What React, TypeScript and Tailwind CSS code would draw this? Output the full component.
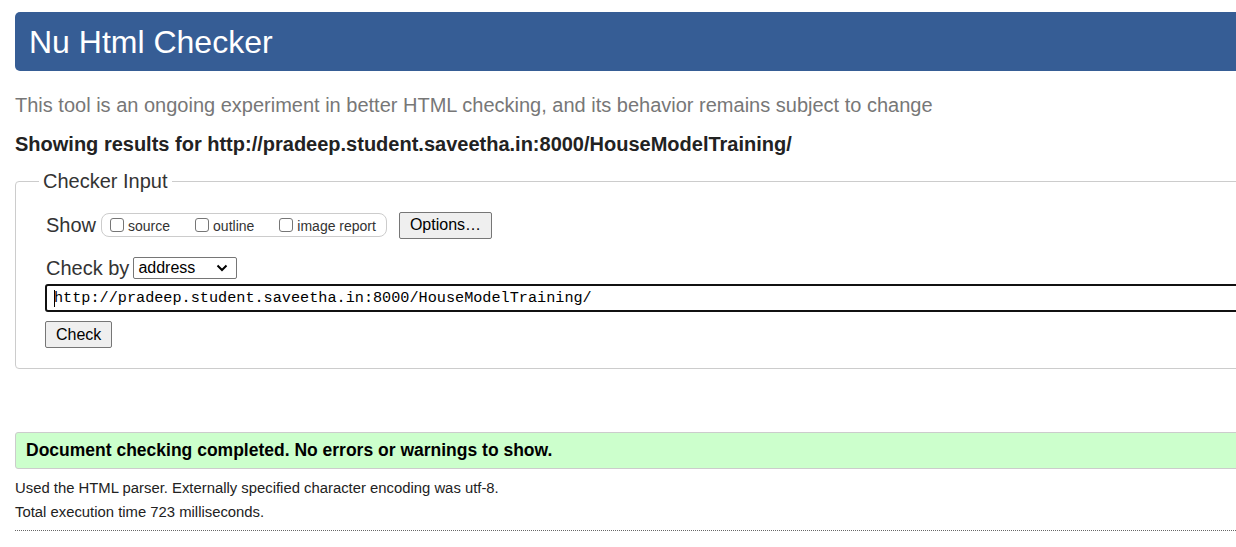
import React from 'react';

function Checkbox({ label }: { label: string }) {
  return (
    <label className="flex items-center gap-[4px]">
      <span className="w-[14px] h-[14px] rounded-[3px] border border-[#767676] bg-white" />
      <span className="text-[14px] text-[#333] mt-[2px]">{label}</span>
    </label>
  );
}

function Button({ children }: { children: React.ReactNode }) {
  return (
    <span className="inline-flex items-center px-[10px] h-[27px] bg-[#efefef] border border-[#767676] rounded-[2px] text-[16px] text-black">
      {children}
    </span>
  );
}

export default function App() {
  return (
    <div className="w-[1236px] h-[547px] overflow-hidden bg-white font-['Liberation_Sans',Arial,sans-serif] text-[#222]">
      <div className="w-[1300px] pl-[15px] pt-[12px]">
        <h1 className="h-[59px] flex items-center pl-[14px] bg-[#365d95] rounded-l-[5px] text-white text-[32px] leading-none">
          Nu Html Checker
        </h1>

        <p className="mt-[22px] text-[20px] leading-[24px] text-[#777]">
          This tool is an ongoing experiment in better HTML checking, and its behavior remains subject to change
        </p>
        <p className="mt-[15px] text-[20px] leading-[24px] font-bold text-[#222]">
          Showing results for http://pradeep.student.saveetha.in:8000/HouseModelTraining/
        </p>

        <fieldset className="mt-[10px] h-[203px] border border-[#ccc] rounded-l-[4px] pl-[30px] pt-[14px]">
          <legend className="-ml-[7px] px-[4px] text-[20px] text-[#333]">Checker Input</legend>
          <div className="flex items-center gap-[5px]">
            <span className="text-[20px] text-[#333]">Show</span>
            <div className="flex items-center gap-[25px] h-[24px] pl-[8px] pr-[10px] border border-[#ccc] rounded-[8px]">
              <Checkbox label="source" />
              <Checkbox label="outline" />
              <Checkbox label="image report" />
            </div>
            <span className="ml-[7px]">
              <Button>Options…</Button>
            </span>
          </div>

          <div className="mt-[13px] flex items-center gap-[4px]">
            <span className="text-[20px] text-[#333]">Check by</span>
            <span className="flex items-center justify-between w-[104px] h-[22px] pl-[4px] pr-[8px] border border-[#767676] rounded-[2px] text-[16px] text-black">
              address
              <svg width="12" height="8" viewBox="0 0 12 8" fill="none">
                <path d="M1.5 1.5 L6 6 L10.5 1.5" stroke="#000" strokeWidth="2" />
              </svg>
            </span>
          </div>

          <div className="mt-[1px] -ml-px h-[28px] flex items-center pl-[7px] border-2 border-[#111] rounded-[3px] font-['Liberation_Mono',monospace] text-[15.2px] text-black">
            <span className="w-px h-[17px] bg-black -mr-px" />
            http://pradeep.student.saveetha.in:8000/HouseModelTraining/
          </div>

          <div className="mt-[9px] -ml-px">
            <Button>Check</Button>
          </div>
        </fieldset>

        <div className="mt-[63px] h-[37px] flex items-center pl-[10px] bg-[#ccffcc] border border-[#ccc] rounded-l-[3px] text-[17.5px] font-bold text-black">
          Document checking completed. No errors or warnings to show.
        </div>

        <p className="mt-[7px] text-[14.85px] leading-[24px] text-[#222]">
          Used the HTML parser. Externally specified character encoding was utf-8.
        </p>
        <p className="text-[14.85px] leading-[24px] text-[#222]">Total execution time 723 milliseconds.</p>
        <div className="mt-[6px] border-t border-dotted border-[#666]" />
      </div>
    </div>
  );
}
